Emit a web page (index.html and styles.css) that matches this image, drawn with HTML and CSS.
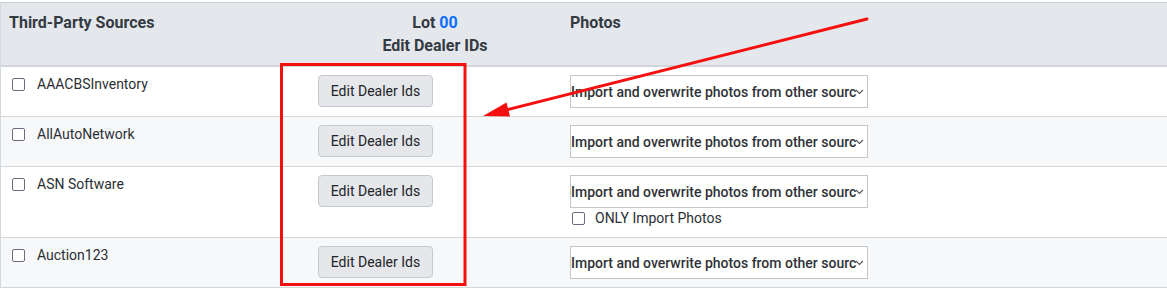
FILE: index.html
```html
<!DOCTYPE html>
<html>
<head>
<meta charset="utf-8">
<link rel="stylesheet" href="styles.css">
</head>
<body>
<div class="page">
  <div class="grid">
    <div class="row head">
      <div class="cell c1">Third-Party Sources</div>
      <div class="cell c2"><div>Lot <span class="lot">00</span></div><div>Edit Dealer IDs</div></div>
      <div class="cell c3">Photos</div>
    </div>

    <div class="row">
      <div class="cell c1"><label class="chk"><span class="box"></span>AAACBSInventory</label></div>
      <div class="cell c2"><button class="btn">Edit Dealer Ids</button></div>
      <div class="cell c3"><div class="sel"><span class="sel-text">Import and overwrite photos from other sourc</span><svg class="chev" width="9" height="6" viewBox="0 0 9 6"><path d="M1 1 L4.5 4.5 L8 1" fill="none" stroke="#555" stroke-width="1.1"/></svg></div></div>
    </div>

    <div class="row alt">
      <div class="cell c1"><label class="chk"><span class="box"></span>AllAutoNetwork</label></div>
      <div class="cell c2"><button class="btn">Edit Dealer Ids</button></div>
      <div class="cell c3"><div class="sel"><span class="sel-text">Import and overwrite photos from other sourc</span><svg class="chev" width="9" height="6" viewBox="0 0 9 6"><path d="M1 1 L4.5 4.5 L8 1" fill="none" stroke="#555" stroke-width="1.1"/></svg></div></div>
    </div>

    <div class="row">
      <div class="cell c1"><label class="chk"><span class="box"></span>ASN Software</label></div>
      <div class="cell c2"><button class="btn">Edit Dealer Ids</button></div>
      <div class="cell c3 tall">
        <div class="sel"><span class="sel-text">Import and overwrite photos from other sourc</span><svg class="chev" width="9" height="6" viewBox="0 0 9 6"><path d="M1 1 L4.5 4.5 L8 1" fill="none" stroke="#555" stroke-width="1.1"/></svg></div>
        <label class="chk only"><span class="box"></span>ONLY Import Photos</label>
      </div>
    </div>

    <div class="row alt">
      <div class="cell c1"><label class="chk"><span class="box"></span>Auction123</label></div>
      <div class="cell c2"><button class="btn">Edit Dealer Ids</button></div>
      <div class="cell c3"><div class="sel"><span class="sel-text">Import and overwrite photos from other sourc</span><svg class="chev" width="9" height="6" viewBox="0 0 9 6"><path d="M1 1 L4.5 4.5 L8 1" fill="none" stroke="#555" stroke-width="1.1"/></svg></div></div>
    </div>
  </div>

  <svg class="annot" width="1167" height="289" viewBox="0 0 1167 289">
    <rect x="281.5" y="64.5" width="183.5" height="220" fill="none" stroke="#f51010" stroke-width="3"/>
    <line x1="867" y1="19" x2="506" y2="110" stroke="#f51010" stroke-width="3" stroke-linecap="round"/>
    <polygon points="483,116 506.5,102.5 510,116.5" fill="#f51010"/>
  </svg>
</div>
</body>
</html>
```

FILE: styles.css
```css
html, body {
  margin: 0;
  padding: 0;
  background: #ffffff;
}

body {
  font-family: Roboto, "Liberation Sans", Arial, sans-serif;
  font-size: 14px;
  color: #2f3338;
}

.page {
  position: relative;
  width: 1167px;
  height: 289px;
  overflow: hidden;
  padding-top: 2px;
  box-sizing: border-box;
}

.grid {
  border-top: 1px solid #c9ced5;
  border-left: 1px solid #d5d9de;
}

.row {
  display: grid;
  grid-template-columns: 309px 250px 1fr;
  border-bottom: 1px solid #d6d6d6;
  background: #ffffff;
}

.row.alt {
  background: #f7f8fa;
}

.row.head {
  background: #e4e7ec;
  border-bottom: 2px solid #d2d5da;
  font-weight: 700;
  font-size: 16px;
  line-height: 23px;
  color: #343a42;
}

.cell {
  padding: 8px 10px;
  box-sizing: border-box;
}

.head .cell {
  padding: 8px 8px 8px 8px;
}

.head .c2 {
  text-align: center;
}

.head .c3 {
  padding-left: 10px;
}

.lot {
  color: #0d6efd;
}

.row:not(.head) .c1 {
  padding: 9px 10px 8px 11px;
}

.chk {
  display: flex;
  align-items: center;
  gap: 12px;
  line-height: 17px;
  color: #2b2f33;
}

.box {
  width: 13px;
  height: 13px;
  box-sizing: border-box;
  border: 1.5px solid #6f6a7b;
  border-radius: 2px;
  background: #ffffff;
  flex: none;
}

.row:not(.head) .c2 {
  padding: 8px 8px;
}

.btn {
  display: block;
  width: 115px;
  height: 32px;
  padding: 0;
  font-family: Roboto, "Liberation Sans", Arial, sans-serif;
  font-size: 14px;
  color: #222428;
  background: #e5e7eb;
  border: 1px solid #c5c8cd;
  border-radius: 4px;
}

.row:not(.head) .c3 {
  padding: 8px 10px;
}

.row:not(.head) .c3.tall {
  padding-bottom: 10px;
}

.sel {
  display: flex;
  align-items: center;
  width: 298px;
  height: 33px;
  box-sizing: border-box;
  border: 1px solid #c6c6c6;
  background: #ffffff;
  padding: 0 3px 0 0;
}

.sel-text {
  flex: 1;
  min-width: 0;
  white-space: nowrap;
  font-weight: 500;
  font-size: 14px;
  color: #2f3338;
}

.chev {
  flex: none;
  margin-left: 1px;
}

.chk.only {
  margin-top: 1px;
  line-height: 18px;
  padding-left: 2px;
  gap: 10px;
}

.annot {
  position: absolute;
  left: 0;
  top: 0;
  pointer-events: none;
}
```
